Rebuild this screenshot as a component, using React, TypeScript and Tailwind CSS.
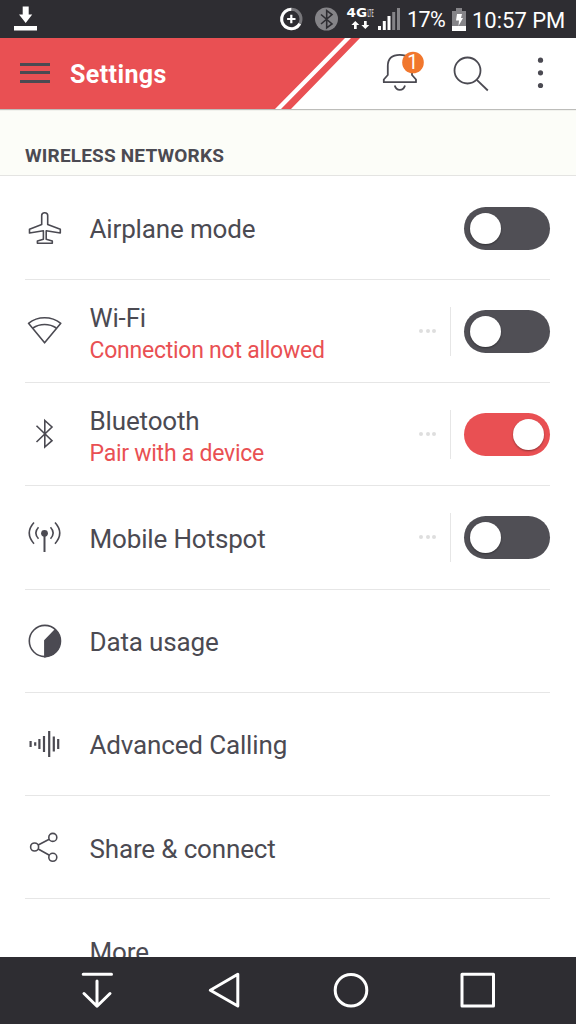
import { useState } from "react";
import type { ReactNode } from "react";

interface SettingItem {
  id: string;
  title: string;
  subtitle?: string;
  icon?: ReactNode;
  more?: boolean;
  toggle?: boolean;
}

const line = { fill: "none", stroke: "#4b4a52", strokeWidth: 1.6 };

const AirplaneIcon = () => (
  <svg width="34" height="34" viewBox="28 211 34 34" {...line} strokeLinejoin="round">
    <path d="M41.7 224.5V215.5Q41.7 212.7 44.7 212.7Q47.7 212.7 47.7 215.5V224.5L60.3 229.2V233L46.2 230.8V239.2L52.3 241V243.2H37.4V241L43.4 239.2V230.8L29.5 233V229.2Z" />
  </svg>
);

const WifiIcon = () => (
  <svg width="36" height="30" viewBox="27 316 36 30" {...line} strokeLinejoin="round">
    <path d="M28.5 323.3Q35.5 317.8 44.6 317.8Q53.7 317.8 60.8 323.3L44.6 342.8Z" />
    <path d="M33 328Q38 324.5 44.6 324.5Q51.2 324.5 56.3 328" />
  </svg>
);

const BluetoothIcon = () => (
  <svg width="34" height="32" viewBox="28 418.5 34 32" {...line}>
    <path d="M36.5 426.2L52 441.2L44.8 447.5V421L52 427.5L36.5 442.5" />
  </svg>
);

const HotspotIcon = () => (
  <svg width="36" height="34" viewBox="27 520 36 34" {...line}>
    <path d="M34 522.5Q24.5 533 34 543.7M38.5 527.3Q33.2 533 38.5 538.7M50.5 527.3Q55.8 533 50.5 538.7M55 522.5Q64.5 533 55 543.7" />
    <path d="M44.5 533V552" strokeWidth="2" />
    <circle cx="44.5" cy="533.3" r="3.4" fill="#4b4a52" stroke="none" />
  </svg>
);

const DataUsageIcon = () => (
  <svg width="34" height="34" viewBox="28 624 34 34" {...line}>
    <circle cx="44.9" cy="641" r="15.6" />
    <path d="M44.9 656.6V640.5L55.2 630A15.6 15.6 0 0 1 44.9 656.6Z" fill="#4b4a52" />
  </svg>
);

const CallingIcon = () => (
  <svg width="34" height="30" viewBox="28 729 34 30" {...line} strokeWidth="2.2">
    <path d="M30.6 741V747M35.2 742.3V745.7M39.4 739V749M44 736V752M49.2 731V757M53.8 736.5V751.5M58.2 739V749" />
  </svg>
);

const ShareIcon = () => (
  <svg width="34" height="34" viewBox="28 830 34 34" {...line}>
    <path d="M38.2 845L49.2 839.3M38.2 849L49.4 855.2" />
    <circle cx="34.6" cy="847" r="4" />
    <circle cx="52.8" cy="837.4" r="4" />
    <circle cx="52.8" cy="857.3" r="4" />
  </svg>
);

const items: SettingItem[] = [
  { id: "airplane", title: "Airplane mode", icon: <AirplaneIcon />, toggle: true },
  { id: "wifi", title: "Wi-Fi", subtitle: "Connection not allowed", icon: <WifiIcon />, more: true, toggle: true },
  { id: "bluetooth", title: "Bluetooth", subtitle: "Pair with a device", icon: <BluetoothIcon />, more: true, toggle: true },
  { id: "hotspot", title: "Mobile Hotspot", icon: <HotspotIcon />, more: true, toggle: true },
  { id: "data", title: "Data usage", icon: <DataUsageIcon /> },
  { id: "calling", title: "Advanced Calling", icon: <CallingIcon /> },
  { id: "share", title: "Share & connect", icon: <ShareIcon /> },
  { id: "more", title: "More" },
];

const Toggle = ({ on, onClick }: { on: boolean; onClick: () => void }) => (
  <button
    role="switch"
    aria-checked={on}
    onClick={onClick}
    className={`mt-px flex h-[43px] w-[86px] items-center rounded-full px-[6px] ${
      on ? "justify-end bg-[#e95053]" : "justify-start bg-[#504f55]"
    }`}
  >
    <span className="size-[31px] rounded-full bg-white shadow-[0_1px_2px_rgba(0,0,0,0.4)]" />
  </button>
);

const StatusBar = () => (
  <div className="flex h-[38px] shrink-0 items-center bg-[#2e2d32] text-white">
    <svg className="ml-[14px]" width="24" height="38" viewBox="14 0 24 38" fill="#fff">
      <path d="M22.7 6.5H28.7V14.5H32.2L25.7 23L19 14.5H22.7ZM14 26H37V30.5H14Z" />
    </svg>
    <svg className="ml-[241px]" width="126" height="38" viewBox="279 0 126 38">
      {/* data saver */}
      <g fill="none" strokeWidth="3">
        <circle cx="291.3" cy="19" r="9.7" stroke="#77767a" />
        <path d="M291.3 9.3A9.7 9.7 0 1 0 299.8 23.7" stroke="#fff" />
        <path d="M291.3 14.8V23.2M287.1 19H295.5" stroke="#fff" strokeWidth="2.2" />
      </g>
      {/* bluetooth */}
      <circle cx="326.5" cy="19" r="11.5" fill="#858488" />
      <path d="M321 14.5L332 24L326.7 28V10.5L332 14.5L321 24" fill="none" stroke="#2e2d32" strokeWidth="1.6" />
      {/* network type */}
      <text x="346.5" y="17" fill="#fff" fontFamily="DejaVu Sans" fontWeight="bold" fontSize="12.5" textLength="20.5" lengthAdjust="spacingAndGlyphs">4G</text>
      <text x="367.5" y="16.5" fill="#c4c4c6" fontFamily="Roboto" fontWeight="bold" fontSize="10" textLength="6" lengthAdjust="spacingAndGlyphs">LTE</text>
      <path d="M355.3 21L359.3 25H356.7V29H354V25H351.4ZM365.3 29L369.3 25H366.7V21H364V25H361.4Z" fill="#fff" />
      {/* signal */}
      <path d="M378 26H381V30H378ZM382.8 21H385.8V30H382.8ZM387.5 16H390.5V30H387.5Z" fill="#fff" />
      <path d="M392.2 12H395.2V30H392.2ZM397 8H400V30H397Z" fill="#858488" />
    </svg>
    <span className="mt-0.5 ml-[2px] w-[44px] text-[21.5px] tracking-[-0.6px]">17%</span>
    <svg width="16" height="38" viewBox="451 0 16 38">
      <path d="M456 8H462V11H466V31H452V11H456Z" fill="#858488" />
      <path d="M452 26H466V31H452Z" fill="#fff" />
      <path d="M457 14H462L461 18H463L458.5 26L459 20.5H456Z" fill="#fff" />
    </svg>
    <span className="mt-0.5 ml-[5px] text-[22px] whitespace-nowrap">10:57 PM</span>
  </div>
);

const Header = () => (
  <header className="relative z-10 h-[71px] shrink-0 bg-white shadow-[0_1px_1px_rgba(0,0,0,0.25)]">
    <svg className="absolute inset-0" width="360" height="71" viewBox="0 38 360 71" fill="#e95053">
      <path d="M0 38H345L275 109H0ZM351 38H360L291 109H281Z" />
    </svg>
    <div className="relative flex h-full items-center">
      <button className="ml-[20px] flex w-[30px] flex-col gap-[5.5px] pb-[2px]">
        <span className="h-[3px] bg-[#4b4a52]" />
        <span className="h-[3px] bg-[#4b4a52]" />
        <span className="h-[3px] bg-[#4b4a52]" />
      </button>
      <h1 className="ml-[20px] flex-1 pt-[2px] text-[25px] leading-8 font-bold tracking-[0.4px] text-white">Settings</h1>
      <svg width="192" height="71" viewBox="375 38 192 71" {...line} strokeWidth="1.8">
        <path d="M383.8 82.2V79.5L387.8 75V66Q387.8 54.8 399.8 54.8Q412 54.8 412 66V75L416 79.5V82.2Z" strokeLinejoin="round" />
        <path d="M394.7 85.5Q396 89.8 399.8 89.8Q403.8 89.8 405 85.5" />
        <circle cx="413" cy="62.5" r="10.8" fill="#f1772d" stroke="none" />
        <text x="412.7" y="69.3" textAnchor="middle" fill="#fff" stroke="none" fontFamily="Roboto" fontSize="19.5">1</text>
        <circle cx="467.5" cy="70.5" r="13" />
        <path d="M476.8 79.8L487.8 90.5" />
        <g fill="#4b4a52" stroke="none">
          <circle cx="540.5" cy="60.2" r="2.6" />
          <circle cx="540.5" cy="72.8" r="2.6" />
          <circle cx="540.5" cy="85.5" r="2.6" />
        </g>
      </svg>
      <span className="w-[9px]" />
    </div>
  </header>
);

const NavBar = () => (
  <nav className="flex h-[67px] shrink-0 items-center bg-[#2e2d32] pl-[80px]">
    <svg width="416" height="67" viewBox="80 957 416 67" fill="none" stroke="#fff" strokeWidth="3" strokeLinejoin="round">
      <path d="M83.2 974.3H111.5M97 981V1006M84 993.5L97 1006.2L110 993.5" strokeLinecap="round" />
      <path d="M237.8 974.2V1006L210.3 990.2Z" />
      <circle cx="351" cy="990.2" r="15.8" />
      <path d="M462 974.3H493.5V1006H462Z" />
    </svg>
  </nav>
);

export default function App() {
  const [enabled, setEnabled] = useState<Record<string, boolean>>({ bluetooth: true });

  const flip = (id: string) => setEnabled({ ...enabled, [id]: !enabled[id] });

  return (
    <div className="flex h-screen w-full flex-col overflow-hidden bg-white font-['Roboto',sans-serif] text-[#4b4a52]">
      <StatusBar />
      <Header />

      <main className="min-h-0 flex-1 overflow-hidden">
        <h2 className="h-[67px] border-b border-[#e4e4e2] bg-[#fcfdf8] pt-[35px] pl-[25px] text-[19px] leading-6 font-bold tracking-[0.18px]">
          WIRELESS NETWORKS
        </h2>
        <div className="pt-[0.8px] pr-[26px] pl-[25px]">
          {items.map((item) => (
            <div key={item.id} className="flex h-[103.2px] items-center border-b border-[#e6e6e6]">
              <div className="flex w-[39px] justify-center">{item.icon}</div>
              <div className="ml-[25.5px] flex-1">
                <p className={`text-[26px] leading-[32px] tracking-[-0.15px] ${item.subtitle ? "pt-[5px]" : "pt-[3px]"}`}>
                  {item.title}
                </p>
                {item.subtitle && (
                  <p className="pt-[2px] text-[23px] leading-[30px] tracking-[-0.25px] text-[#e95053]">{item.subtitle}</p>
                )}
              </div>
              {item.more && (
                <div className="mr-[13px] flex h-[49px] w-[32px] items-center gap-[2.5px] border-r border-[#e6e6e6]">
                  <span className="size-1 rounded-full bg-[#dedede]" />
                  <span className="size-1 rounded-full bg-[#dedede]" />
                  <span className="size-1 rounded-full bg-[#dedede]" />
                </div>
              )}
              {item.toggle && <Toggle on={!!enabled[item.id]} onClick={() => flip(item.id)} />}
            </div>
          ))}
        </div>
      </main>

      <NavBar />
    </div>
  );
}
